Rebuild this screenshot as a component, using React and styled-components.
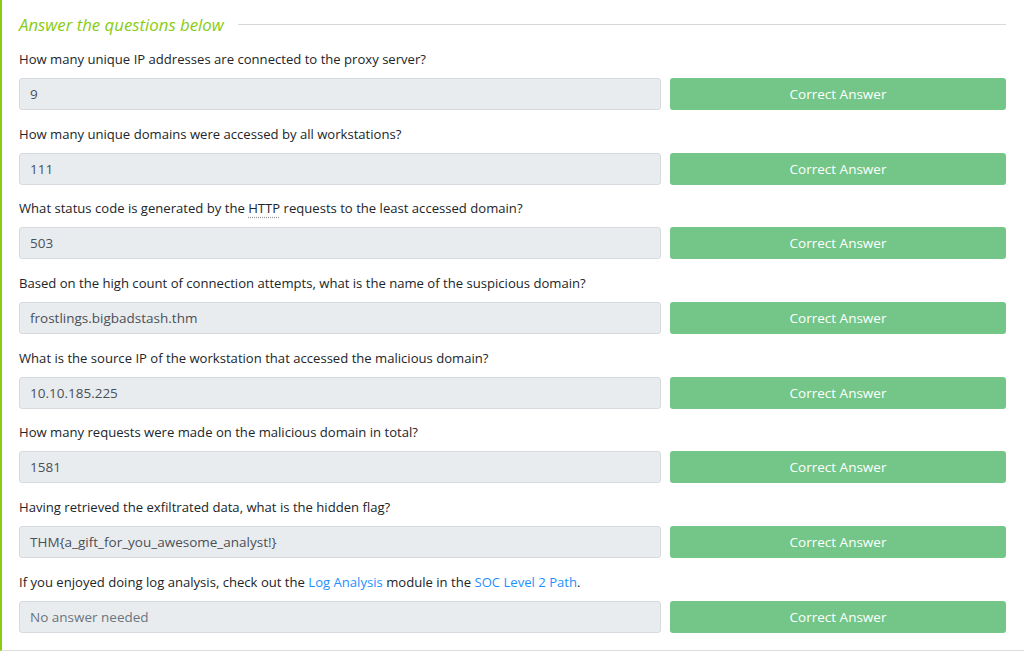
import React from "react";
import styled, { createGlobalStyle } from "styled-components";

const Global = createGlobalStyle`
  html, body { margin: 0; padding: 0; background: #fff; }
  body { font-family: "Open Sans", "Noto Sans", sans-serif; }
`;

const Panel = styled.section`
  box-sizing: border-box;
  width: 1024px;
  height: 651px;
  border-left: 2px solid #88cc14;
  border-bottom: 1px solid #dcdcdc;
  padding: 12px 18px 0 17px;
  overflow: hidden;
`;

const Heading = styled.div`
  display: flex;
  align-items: center;
  gap: 14px;
  height: 24px;
  margin-bottom: 13px;
`;

const HeadingText = styled.h3`
  margin: 0;
  font-size: 16.8px;
  font-weight: 400;
  font-style: italic;
  color: #88cc14;
  white-space: nowrap;
`;

const Rule = styled.div`
  flex: 1;
  height: 1px;
  background: #d8d8d8;
`;

const Question = styled.div`
  margin-bottom: 13.7px;
`;

const Prompt = styled.p`
  margin: 0 0 9px;
  font-size: 13.1px;
  line-height: 20px;
  color: #212529;
`;

const Link = styled.a`
  color: #1e90ff;
  text-decoration: none;
`;

const Abbr = styled.abbr`
  text-decoration: underline dotted #999;
  text-underline-offset: 3px;
`;

const Line = styled.div`
  display: grid;
  grid-template-columns: minmax(0, 1fr) 336px;
  gap: 9px;
`;

const Field = styled.div`
  box-sizing: border-box;
  height: 32px;
  padding: 0 10px;
  display: flex;
  align-items: center;
  background: #e9ecef;
  border: 1px solid #d6dade;
  border-radius: 3px;
  font-size: 13.5px;
  color: ${(p) => (p.$placeholder ? "#6c757d" : "#495057")};
`;

const Submit = styled.button`
  box-sizing: border-box;
  height: 32px;
  border: none;
  border-radius: 3px;
  background: #73c687;
  color: #fff;
  font-family: inherit;
  font-size: 13.5px;
`;

const items = [
  { q: "How many unique IP addresses are connected to the proxy server?", a: "9" },
  { q: "How many unique domains were accessed by all workstations?", a: "111" },
  {
    q: (
      <>
        What status code is generated by the <Abbr>HTTP</Abbr> requests to the least accessed domain?
      </>
    ),
    a: "503",
  },
  { q: "Based on the high count of connection attempts, what is the name of the suspicious domain?", a: "frostlings.bigbadstash.thm" },
  { q: "What is the source IP of the workstation that accessed the malicious domain?", a: "10.10.185.225" },
  { q: "How many requests were made on the malicious domain in total?", a: "1581" },
  { q: "Having retrieved the exfiltrated data, what is the hidden flag?", a: "THM{a_gift_for_you_awesome_analyst!}" },
  {
    q: (
      <>
        If you enjoyed doing log analysis, check out the <Link href="#">Log Analysis</Link> module in the{" "}
        <Link href="#">SOC Level 2 Path</Link>.
      </>
    ),
    a: "No answer needed",
    placeholder: true,
  },
];

export default function App() {
  return (
    <>
      <Global />
      <Panel>
        <Heading>
          <HeadingText>Answer the questions below</HeadingText>
          <Rule />
        </Heading>
        {items.map((it, i) => (
          <Question key={i}>
            <Prompt>{it.q}</Prompt>
            <Line>
              <Field $placeholder={it.placeholder}>{it.a}</Field>
              <Submit>Correct Answer</Submit>
            </Line>
          </Question>
        ))}
      </Panel>
    </>
  );
}
